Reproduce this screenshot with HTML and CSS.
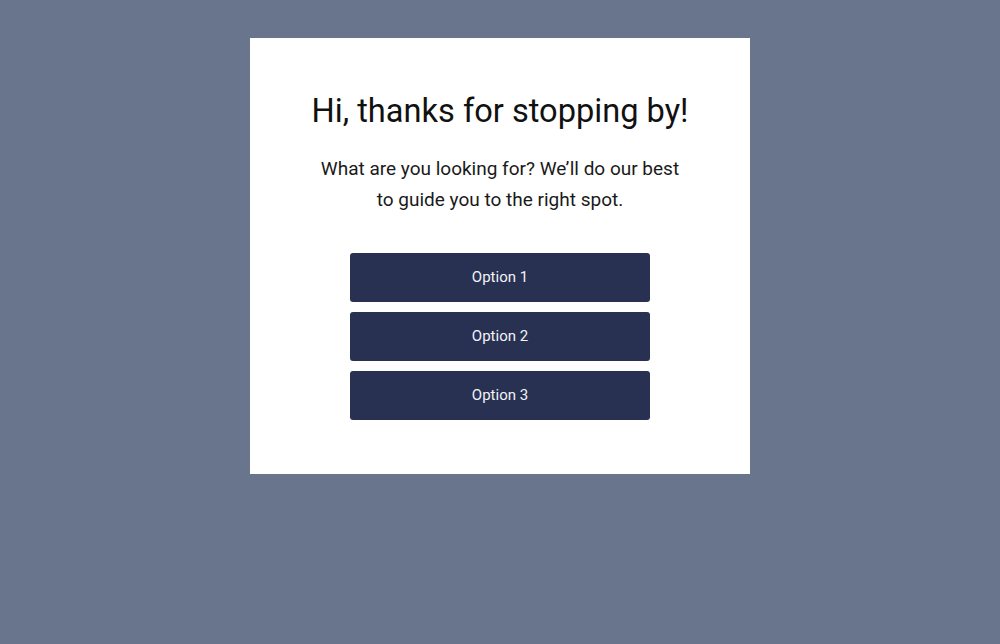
FILE: index.html
```html
<!DOCTYPE html>
<html>
<head>
<meta charset="utf-8">
<link rel="stylesheet" href="styles.css">
</head>
<body>
<div class="page">
  <div class="card">
    <h1 class="title">Hi, thanks for stopping by!</h1>
    <p class="lead">What are you looking for? We’ll do our best<br>to guide you to the right spot.</p>
    <div class="options">
      <button class="option">Option 1</button>
      <button class="option">Option 2</button>
      <button class="option">Option 3</button>
    </div>
  </div>
</div>
</body>
</html>
```
FILE: styles.css
```css
html, body {
  margin: 0;
  padding: 0;
  height: 100%;
}
body {
  background: #68758c;
  font-family: Roboto, "Liberation Sans", sans-serif;
}
.page {
  display: flex;
  justify-content: center;
  padding-top: 38px;
}
.card {
  width: 500px;
  box-sizing: border-box;
  background: #ffffff;
  padding: 54px 50px 54px;
  display: flex;
  flex-direction: column;
  align-items: center;
  text-align: center;
}
.title {
  margin: 0;
  font-size: 32.6px;
  line-height: 38px;
  font-weight: 400;
  color: #111111;
}
.lead {
  margin: 23px 0 0;
  font-size: 19px;
  line-height: 31px;
  color: #1a1a1a;
}
.options {
  margin-top: 38px;
  display: flex;
  flex-direction: column;
  gap: 10px;
  width: 300px;
}
.option {
  height: 49px;
  padding: 0 0 1px;
  border: none;
  border-radius: 3px;
  background: #283152;
  color: #f2f3f7;
  font-family: Roboto, "Liberation Sans", sans-serif;
  font-size: 15px;
  cursor: pointer;
}
```
